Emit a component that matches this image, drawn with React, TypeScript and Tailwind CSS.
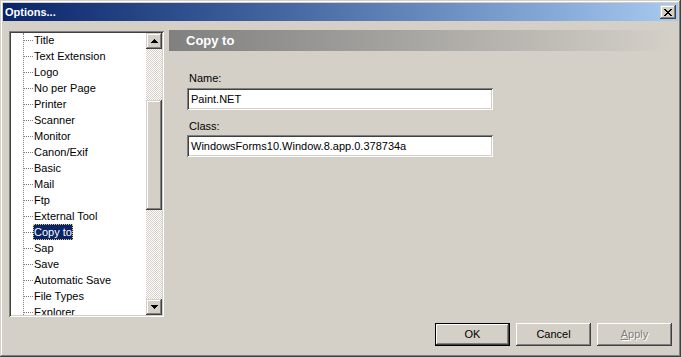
import React from "react";

const items = [
  "Title",
  "Text Extension",
  "Logo",
  "No per Page",
  "Printer",
  "Scanner",
  "Monitor",
  "Canon/Exif",
  "Basic",
  "Mail",
  "Ftp",
  "External Tool",
  "Copy to",
  "Sap",
  "Save",
  "Automatic Save",
  "File Types",
  "Explorer",
];

const raised =
  "shadow-[inset_-1px_-1px_#404040,inset_1px_1px_#d4d0c8,inset_-2px_-2px_#808080,inset_2px_2px_#ffffff]";
const btnRaised =
  "shadow-[inset_-1px_-1px_#404040,inset_1px_1px_#ffffff,inset_-2px_-2px_#808080,inset_2px_2px_#d4d0c8]";
const sunken =
  "shadow-[inset_1px_1px_#808080,inset_-1px_-1px_#ffffff,inset_2px_2px_#404040,inset_-2px_-2px_#d4d0c8]";

function ScrollBtn({ up }: { up?: boolean }) {
  return (
    <div className={`w-[16px] h-[16px] bg-[#d4d0c8] flex items-center justify-center ${raised}`}>
      <svg width="7" height="4" viewBox="0 0 7 4">
        {up ? (
          <path d="M3 0h1v1h1v1h1v1h1v1H0V3h1V2h1V1h1z" fill="#000" />
        ) : (
          <path d="M0 0h7v1H6v1H5v1H4v1H3V3H2V2H1V1H0z" fill="#000" />
        )}
      </svg>
    </div>
  );
}

function Button({ label, def, disabled }: { label: React.ReactNode; def?: boolean; disabled?: boolean }) {
  return (
    <div
      className={`w-[75px] h-[23px] bg-[#d4d0c8] flex items-center justify-center text-[11px] ${
        def ? "border border-black" : ""
      }`}
    >
      <div className={`w-full h-full flex items-center justify-center ${btnRaised}`}>
        {disabled ? (
          <span className="text-[#808080] [text-shadow:1px_1px_#ffffff]">{label}</span>
        ) : (
          <span className="text-black">{label}</span>
        )}
      </div>
    </div>
  );
}

export default function App() {
  return (
    <div
      className="w-[681px] h-[357px] bg-[#d4d0c8] p-[3px] flex flex-col relative shadow-[inset_-1px_-1px_#404040,inset_1px_1px_#d4d0c8,inset_-2px_-2px_#808080,inset_2px_2px_#ffffff]"
      style={{ fontFamily: '"Liberation Sans", Arial, sans-serif' }}
    >
      {/* Title bar */}
      <div className="h-[18px] bg-gradient-to-r from-[#0a246a] to-[#a6caf0] flex items-center justify-between pl-[2px] pr-[2px]">
        <span className="text-white font-bold text-[11px] leading-none">Options...</span>
        <div className={`w-[16px] h-[14px] bg-[#d4d0c8] flex items-center justify-center ${raised}`}>
          <svg width="8" height="7" viewBox="0 0 8 7">
            <path
              d="M0 0h2v1h1v1h2V1h1V0h2v1H7v1H6v1H5v1h1v1h1v1h1v1H6V6H5V5H3v1H2v1H0V6h1V5h1V4h1V3H2V2H1V1H0z"
              fill="#000"
            />
          </svg>
        </div>
      </div>

      {/* Body */}
      <div className="flex items-start pl-[6px] pt-[9px]">
        {/* Tree */}
        <div className={`mt-[1px] w-[155px] h-[286px] bg-white p-[2px] flex ${sunken}`}>
          <div className="flex-1 relative overflow-hidden text-[11px] text-black">
            <div className="absolute left-[12px] top-0 bottom-0 border-l border-dotted border-[#808080]" />
            <div className="-mt-[1px]">
              {items.map((it) => (
                <div key={it} className="relative h-[16px] flex items-center">
                  <div className="absolute left-[13px] w-[9px] top-[8px] border-t border-dotted border-[#808080]" />
                  {it === "Copy to" ? (
                    <span className="ml-[22px] px-[1px] h-[16px] leading-[16px] bg-[#0a246a] text-white outline outline-1 outline-dotted outline-[#e8c860] -outline-offset-1">
                      {it}
                    </span>
                  ) : (
                    <span className="ml-[23px] leading-[16px]">{it}</span>
                  )}
                </div>
              ))}
            </div>
          </div>
          <div className="w-[16px] flex flex-col">
            <ScrollBtn up />
            <div className="flex-1 flex flex-col bg-[repeating-conic-gradient(#d4d0c8_0_25%,#ffffff_0_50%)] bg-[length:2px_2px]">
              <div className="h-[51px]" />
              <div className={`h-[110px] bg-[#d4d0c8] ${raised}`} />
            </div>
            <ScrollBtn />
          </div>
        </div>

        {/* Right panel */}
        <div className="ml-[5px] w-[502px] flex flex-col">
          <div className="h-[21px] bg-gradient-to-r from-[#808080] to-[#d4d0c8] flex items-center pl-[17px]">
            <span className="text-white font-bold text-[13px] leading-none">Copy to</span>
          </div>
          <div className="pl-[18px] flex flex-col text-[11px] text-black">
            <div className="mt-[20px] h-[14px] leading-[14px] pl-[2px]">Name:</div>
            <div className={`mt-[3px] w-[306px] h-[22px] bg-white flex items-center pl-[4px] ${sunken}`}>
              Paint.NET
            </div>
            <div className="mt-[9px] h-[14px] leading-[14px] pl-[2px]">Class:</div>
            <div className={`mt-[2px] w-[306px] h-[22px] bg-white flex items-center pl-[4px] ${sunken}`}>
              WindowsForms10.Window.8.app.0.378734a
            </div>
          </div>
        </div>
      </div>

      {/* Footer */}
      <div className="mt-auto flex justify-end gap-[6px] pr-[6px] pb-[8px]">
        <Button label="OK" def />
        <Button label="Cancel" />
        <Button label={<><span className="underline">A</span>pply</>} disabled />
      </div>
    </div>
  );
}
